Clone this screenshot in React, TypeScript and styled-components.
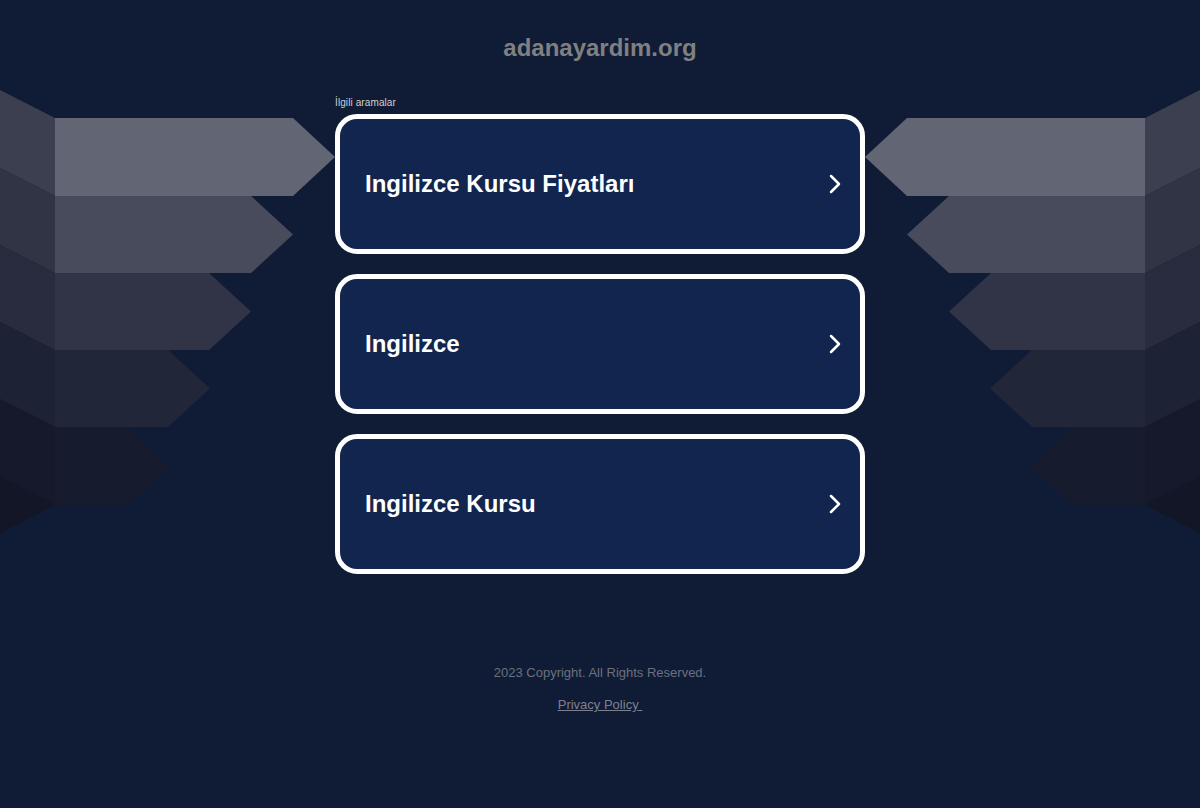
import React from "react";
import styled, { createGlobalStyle } from "styled-components";

const GlobalStyle = createGlobalStyle`
  html, body {
    margin: 0;
    padding: 0;
    background: #101c36;
  }
  body {
    font-family: "Liberation Sans", Arial, sans-serif;
  }
`;

const Page = styled.div`
  display: grid;
  grid-template-columns: 335px 530px 335px;
  width: 1200px;
  min-height: 808px;
  background: #101c36;
`;

const Side = styled.div`
  padding-top: 80px;
`;

const Deco = styled.svg<{ $flip?: boolean }>`
  display: block;
  width: 335px;
  height: 460px;
  transform: ${(p) => (p.$flip ? "scaleX(-1)" : "none")};
`;

const Center = styled.main`
  display: flex;
  flex-direction: column;
`;

const Title = styled.h1`
  margin: 0;
  padding-top: 35px;
  height: 26px;
  line-height: 26px;
  text-align: center;
  font-size: 24px;
  font-weight: bold;
  color: #808080;
`;

const Label = styled.div`
  margin-top: 36px;
  margin-bottom: 5px;
  font-size: 10px;
  line-height: 12px;
  letter-spacing: 0.1px;
  color: #d0d0d0;
`;

const Cards = styled.div`
  display: flex;
  flex-direction: column;
  gap: 20px;
`;

const Card = styled.a`
  box-sizing: border-box;
  height: 140px;
  border: 5px solid #ffffff;
  border-radius: 22px;
  background: #12254e;
  display: flex;
  align-items: center;
  justify-content: space-between;
  padding: 0 17px 0 25px;
  text-decoration: none;
  color: #ffffff;
  font-size: 24px;
  font-weight: bold;
`;

const Chevron = styled.svg`
  width: 16px;
  height: 22px;
  display: block;
`;

const Footer = styled.footer`
  margin-top: 91px;
  display: flex;
  flex-direction: column;
  align-items: center;
  gap: 17px;
  font-size: 13px;
  line-height: 15px;
`;

const Copy = styled.div`
  color: #6c707e;
`;

const Privacy = styled.a`
  color: #7d818f;
  text-decoration: underline;
`;

const bounds = [118, 196, 273, 350, 427, 505];
const bodyRight = [293, 251, 209, 168, 127];
const bodies = ["#616574", "#474b5b", "#303446", "#212639", "#161b2e"];
const sides = ["#3b3f50", "#303445", "#282c3e", "#1e2235", "#15192b"];
const wedges = ["#2d3143", "#25293b", "#1d2133", "#171b2d", "#121627"];

const OFF = 80;

function Decoration({ flip }: { flip?: boolean }) {
  const shapes: React.ReactNode[] = [];
  for (let k = 0; k < 5; k++) {
    const t = bounds[k] - OFF;
    const b = bounds[k + 1] - OFF;
    const m = (t + b) / 2;
    const r = bodyRight[k];
    shapes.push(
      <polygon
        key={`s${k}`}
        points={`0,${t - 28} 55,${t} 55,${b} 0,${b - 28}`}
        fill={sides[k]}
      />
    );
    shapes.push(
      <polygon
        key={`w${k}`}
        points={`0,${b - 28} 55,${b} 0,${b + 28}`}
        fill={wedges[k]}
      />
    );
    shapes.push(
      <polygon
        key={`b${k}`}
        points={`55,${t} ${r},${t} ${r + 42},${m} ${r},${b} 55,${b}`}
        fill={bodies[k]}
      />
    );
  }
  return (
    <Deco $flip={flip} viewBox="0 0 335 460" aria-hidden="true">
      {shapes}
    </Deco>
  );
}

const items = ["Ingilizce Kursu Fiyatları", "Ingilizce", "Ingilizce Kursu"];

export default function App() {
  return (
    <>
      <GlobalStyle />
      <Page>
        <Side>
          <Decoration />
        </Side>
        <Center>
          <Title>adanayardim.org</Title>
          <Label>İlgili aramalar</Label>
          <Cards>
            {items.map((t) => (
              <Card key={t} href="#">
                <span>{t}</span>
                <Chevron viewBox="0 0 16 22">
                  <path
                    d="M4 3 L12 11 L4 19"
                    fill="none"
                    stroke="#ffffff"
                    strokeWidth="2.5"
                    strokeLinecap="round"
                    strokeLinejoin="round"
                  />
                </Chevron>
              </Card>
            ))}
          </Cards>
          <Footer>
            <Copy>2023 Copyright. All Rights Reserved.</Copy>
            <Privacy href="#">Privacy Policy{"\u00a0"}</Privacy>
          </Footer>
        </Center>
        <Side>
          <Decoration flip />
        </Side>
      </Page>
    </>
  );
}
